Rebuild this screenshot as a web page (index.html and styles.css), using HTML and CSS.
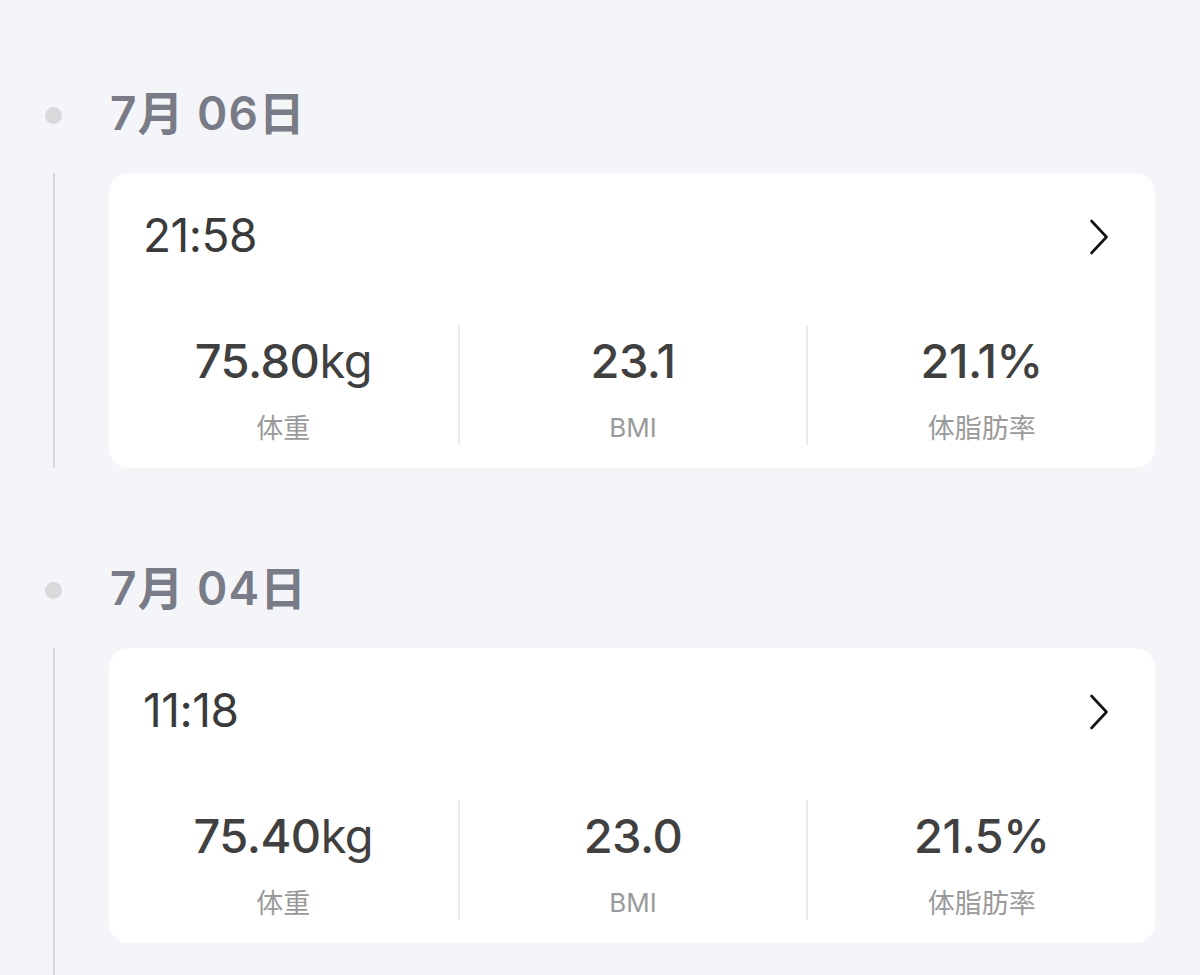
FILE: index.html
```html
<!DOCTYPE html>
<html lang="zh-CN">
<head>
<meta charset="utf-8">
<title>体重记录</title>
<link rel="stylesheet" href="styles.css">
</head>
<body>
<main class="timeline">
  <section class="entry">
    <header class="entry-head">
      <span class="dot"></span>
      <h2 class="date">7月 06日</h2>
    </header>
    <div class="entry-body">
      <span class="rail"></span>
      <article class="card">
        <div class="card-top">
          <span class="time">21:58</span>
          <svg class="chevron" viewBox="0 0 20 36" width="20" height="36" aria-hidden="true">
            <path d="M2.5 2 L17.5 18 L2.5 34" fill="none" stroke="#111" stroke-width="2.6" stroke-linecap="round" stroke-linejoin="round"/>
          </svg>
        </div>
        <div class="stats">
          <div class="stat">
            <span class="value">75.80<span class="unit">kg</span></span>
            <span class="label">体重</span>
          </div>
          <div class="stat">
            <span class="value">23.1</span>
            <span class="label latin">BMI</span>
          </div>
          <div class="stat">
            <span class="value">21.1%</span>
            <span class="label">体脂肪率</span>
          </div>
        </div>
      </article>
    </div>
  </section>

  <section class="entry entry--open">
    <header class="entry-head">
      <span class="dot"></span>
      <h2 class="date">7月 04日</h2>
    </header>
    <div class="entry-body">
      <span class="rail"></span>
      <article class="card">
        <div class="card-top">
          <span class="time">11:18</span>
          <svg class="chevron" viewBox="0 0 20 36" width="20" height="36" aria-hidden="true">
            <path d="M2.5 2 L17.5 18 L2.5 34" fill="none" stroke="#111" stroke-width="2.6" stroke-linecap="round" stroke-linejoin="round"/>
          </svg>
        </div>
        <div class="stats">
          <div class="stat">
            <span class="value">75.40<span class="unit">kg</span></span>
            <span class="label">体重</span>
          </div>
          <div class="stat">
            <span class="value">23.0</span>
            <span class="label latin">BMI</span>
          </div>
          <div class="stat">
            <span class="value">21.5%</span>
            <span class="label">体脂肪率</span>
          </div>
        </div>
      </article>
    </div>
  </section>
</main>
</body>
</html>
```

FILE: styles.css
```css
html, body {
  margin: 0;
  padding: 0;
  background: #f4f5f9;
  height: 100%;
  overflow: hidden;
}

body {
  font-family: Inter, "Noto Sans CJK SC", sans-serif;
  color: #333;
}

.timeline {
  padding: 85px 45px 0 45px;
  display: flex;
  flex-direction: column;
  gap: 92px;
}

.entry-head {
  height: 60px;
  display: flex;
  align-items: center;
  margin-bottom: 28px;
}

.dot {
  width: 17px;
  height: 17px;
  border-radius: 50%;
  background: #d9d9db;
  flex: none;
}

.date {
  margin: 0 0 0 48px;
  font-size: 46px;
  font-weight: 600;
  color: #797c86;
  letter-spacing: 1px;
  line-height: 1;
  position: relative;
  top: -2px;
}

.entry-body {
  display: flex;
}

.rail {
  width: 2px;
  background: #d8d8db;
  margin-left: 8px;
  flex: none;
}

.entry--open .rail {
  margin-bottom: -120px;
}

.card {
  flex: 1;
  margin-left: 54px;
  background: #fff;
  border-radius: 20px;
  height: 295px;
  box-sizing: border-box;
  display: flex;
  flex-direction: column;
}

.card-top {
  height: 124px;
  padding: 0 46px 0 34px;
  display: flex;
  align-items: center;
  justify-content: space-between;
  box-sizing: border-box;
}

.time {
  font-size: 46px;
  font-weight: 400;
  color: #3a3a3a;
  letter-spacing: -0.5px;
}

.chevron {
  display: block;
  position: relative;
  top: 2px;
}

.stats {
  display: grid;
  grid-template-columns: repeat(3, 1fr);
  padding-top: 28px;
}

.stat {
  height: 120px;
  display: flex;
  flex-direction: column;
  align-items: center;
  border-left: 2px solid #ebebed;
}

.stat:first-child {
  border-left: none;
}

.value {
  font-size: 47px;
  font-weight: 500;
  color: #404040;
  line-height: 1;
  margin-top: 12px;
  letter-spacing: -0.5px;
}

.unit {
  font-weight: 400;
}

.label {
  margin-top: 31px;
  font-size: 27px;
  color: #9a9a9a;
  line-height: 1;
}

.label.latin {
  font-size: 26px;
}
```
